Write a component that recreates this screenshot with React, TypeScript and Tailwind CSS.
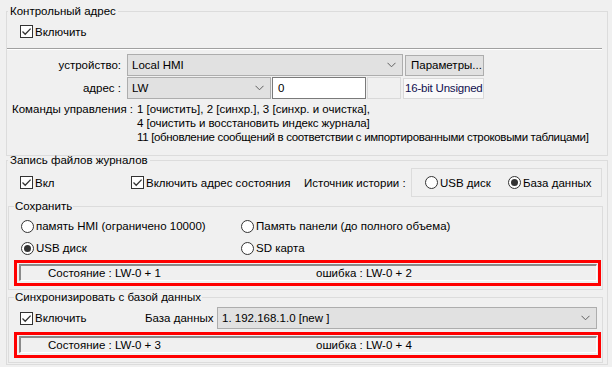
import React from "react";

const Check = ({ checked = true }: { checked?: boolean }) => (
  <span className="flex h-[13px] w-[13px] shrink-0 items-center justify-center border border-[#333333] bg-white">
    {checked && (
      <svg width="11" height="11" viewBox="0 0 11 11">
        <path d="M1.5 5.5 L4.2 8.2 L9.6 2.6" fill="none" stroke="#333333" strokeWidth="1.3" />
      </svg>
    )}
  </span>
);

const Radio = ({ checked = false }: { checked?: boolean }) => (
  <span className="flex h-[13px] w-[13px] shrink-0 items-center justify-center rounded-full border border-[#333333] bg-white">
    {checked && <span className="h-[7px] w-[7px] rounded-full bg-[#333333]" />}
  </span>
);

const Chevron = () => (
  <svg width="9" height="6" viewBox="0 0 9 6" className="shrink-0">
    <path d="M0.5 0.8 L4.5 4.8 L8.5 0.8" fill="none" stroke="#606060" strokeWidth="1" />
  </svg>
);

const Select = ({ text, className }: { text: string; className: string }) => (
  <div
    className={`flex h-[22px] shrink-0 items-center justify-between border border-[#adadad] bg-[#e1e1e1] pl-[4px] pr-[6px] ${className}`}
  >
    <span>{text}</span>
    <Chevron />
  </div>
);

const StatusBox = ({ a, b }: { a: string; b: string }) => (
  <div className="ml-[5px] h-[26px] w-[587px] border-[3px] border-[#ff0000] pl-[2px] pt-[1px]">
    <div className="flex h-[17px] w-[578px] items-center border-b border-l-2 border-r border-t-2 border-b-white border-l-[#8a8a8a] border-r-white border-t-[#8a8a8a]">
      <span className="w-[295px] shrink-0 pl-[27px]">Состояние : {a}</span>
      <span>ошибка : {b}</span>
    </div>
  </div>
);

export default function App() {
  return (
    <div className="h-[367px] w-[612px] overflow-hidden whitespace-nowrap bg-[#f0f0f0] pt-[4px] font-['Liberation_Sans',Arial,sans-serif] text-[11.5px] leading-[14px] text-black">
      {/* Контрольный адрес */}
      <fieldset className="ml-[6px] h-[152px] w-[602px] border border-[#dcdcdc]">
        <legend className="ml-[1px] px-[2px]">Контрольный адрес</legend>
        <div className="mt-[7px] flex h-[13px] items-center gap-[2px] pl-[13px]">
          <Check />
          <span>Включить</span>
        </div>
        <div className="mt-[10px] h-[2px] w-[595px] border-b border-t border-b-white border-t-[#a0a0a0]" />
        <div className="mt-[4px] flex items-center">
          <span className="w-[114px] shrink-0 text-right">устройство:</span>
          <Select text="Local HMI" className="ml-[6px] w-[276px]" />
          <div className="ml-[2px] flex h-[21px] w-[79px] shrink-0 items-center border border-[#adadad] bg-[#e1e1e1] pl-[5px]">
            Параметры...
          </div>
        </div>
        <div className="mt-[1px] flex items-center">
          <span className="w-[114px] shrink-0 text-right">адрес :</span>
          <Select text="LW" className="ml-[6px] w-[144px]" />
          <div className="ml-[1px] flex h-[22px] w-[94px] shrink-0 items-center border border-[#7a7a7a] bg-white pl-[5px]">0</div>
          <div className="ml-[1px] h-[22px] w-[34px] shrink-0 border border-[#d9d9d9]" />
          <div className="ml-[2px] flex h-[21px] w-[81px] shrink-0 items-center border border-[#d9d9d9] bg-[#f9f9f9] pl-[1px] tracking-[-0.2px] text-[#101050]">
            16-bit Unsigned
          </div>
        </div>
        <div className="mt-[3px] flex pl-[5px]">
          <span className="w-[125px] shrink-0">Команды управления :</span>
          <div className="flex flex-col">
            <span>1 [очистить], 2 [синхр.], 3 [синхр. и очистка],</span>
            <span className="tracking-[-0.1px]">4 [очистить и восстановить индекс журнала]</span>
            <span className="tracking-[-0.33px]">
              11 [обновление сообщений в соответствии с импортированными строковыми таблицами]
            </span>
          </div>
        </div>
      </fieldset>

      {/* Запись файлов журналов */}
      <fieldset className="-mt-[3px] ml-[6px] h-[212px] w-[602px] border border-[#dcdcdc]">
        <legend className="ml-[1px] px-[2px]">Запись файлов журналов</legend>
        <div className="mt-[1px] flex h-[29px] items-center">
          <div className="flex w-[124px] shrink-0 items-center gap-[2px] pl-[13px]">
            <Check />
            <span>Вкл</span>
          </div>
          <div className="flex w-[173px] shrink-0 items-center gap-[2px]">
            <Check />
            <span>Включить адрес состояния</span>
          </div>
          <span className="w-[107px] shrink-0">Источник истории :</span>
          <div className="flex h-[29px] w-[191px] shrink-0 items-center border border-[#dcdcdc] pl-[13px]">
            <div className="flex w-[83px] shrink-0 items-center gap-[2px]">
              <Radio />
              <span>USB диск</span>
            </div>
            <div className="flex items-center gap-[2px]">
              <Radio checked />
              <span>База данных</span>
            </div>
          </div>
        </div>

        {/* Сохранить */}
        <fieldset className="ml-[1px] mt-[2px] h-[91px] w-[595px] border border-[#dcdcdc]">
          <legend className="ml-[5px] px-[1px]">Сохранить</legend>
          <div className="mt-[5px] flex h-[16px] items-center pl-[12px]">
            <div className="flex w-[220px] shrink-0 items-center gap-[2px]">
              <Radio />
              <span>память HMI (ограничено 10000)</span>
            </div>
            <div className="flex items-center gap-[2px]">
              <Radio />
              <span>Память панели (до полного объема)</span>
            </div>
          </div>
          <div className="mt-[6px] flex h-[16px] items-center pl-[12px]">
            <div className="flex w-[220px] shrink-0 items-center gap-[2px]">
              <Radio checked />
              <span>USB диск</span>
            </div>
            <div className="flex items-center gap-[2px]">
              <Radio />
              <span>SD карта</span>
            </div>
          </div>
          <div className="mt-[4px]">
            <StatusBox a="LW-0 + 1" b="LW-0 + 2" />
          </div>
        </fieldset>

        {/* Синхронизировать с базой данных */}
        <fieldset className="ml-[1px] h-[73px] w-[595px] border border-[#dcdcdc]">
          <legend className="ml-[5px] px-[1px]">Синхронизировать с базой данных</legend>
          <div className="mt-[3px] flex h-[22px] items-center pl-[11px]">
            <div className="flex w-[125px] shrink-0 items-center gap-[2px]">
              <Check />
              <span>Включить</span>
            </div>
            <span className="w-[72px] shrink-0">База данных</span>
            <Select text="1. 192.168.1.0 [new ]" className="w-[380px]" />
          </div>
          <div className="mt-[3px]">
            <StatusBox a="LW-0 + 3" b="LW-0 + 4" />
          </div>
        </fieldset>
      </fieldset>
    </div>
  );
}
